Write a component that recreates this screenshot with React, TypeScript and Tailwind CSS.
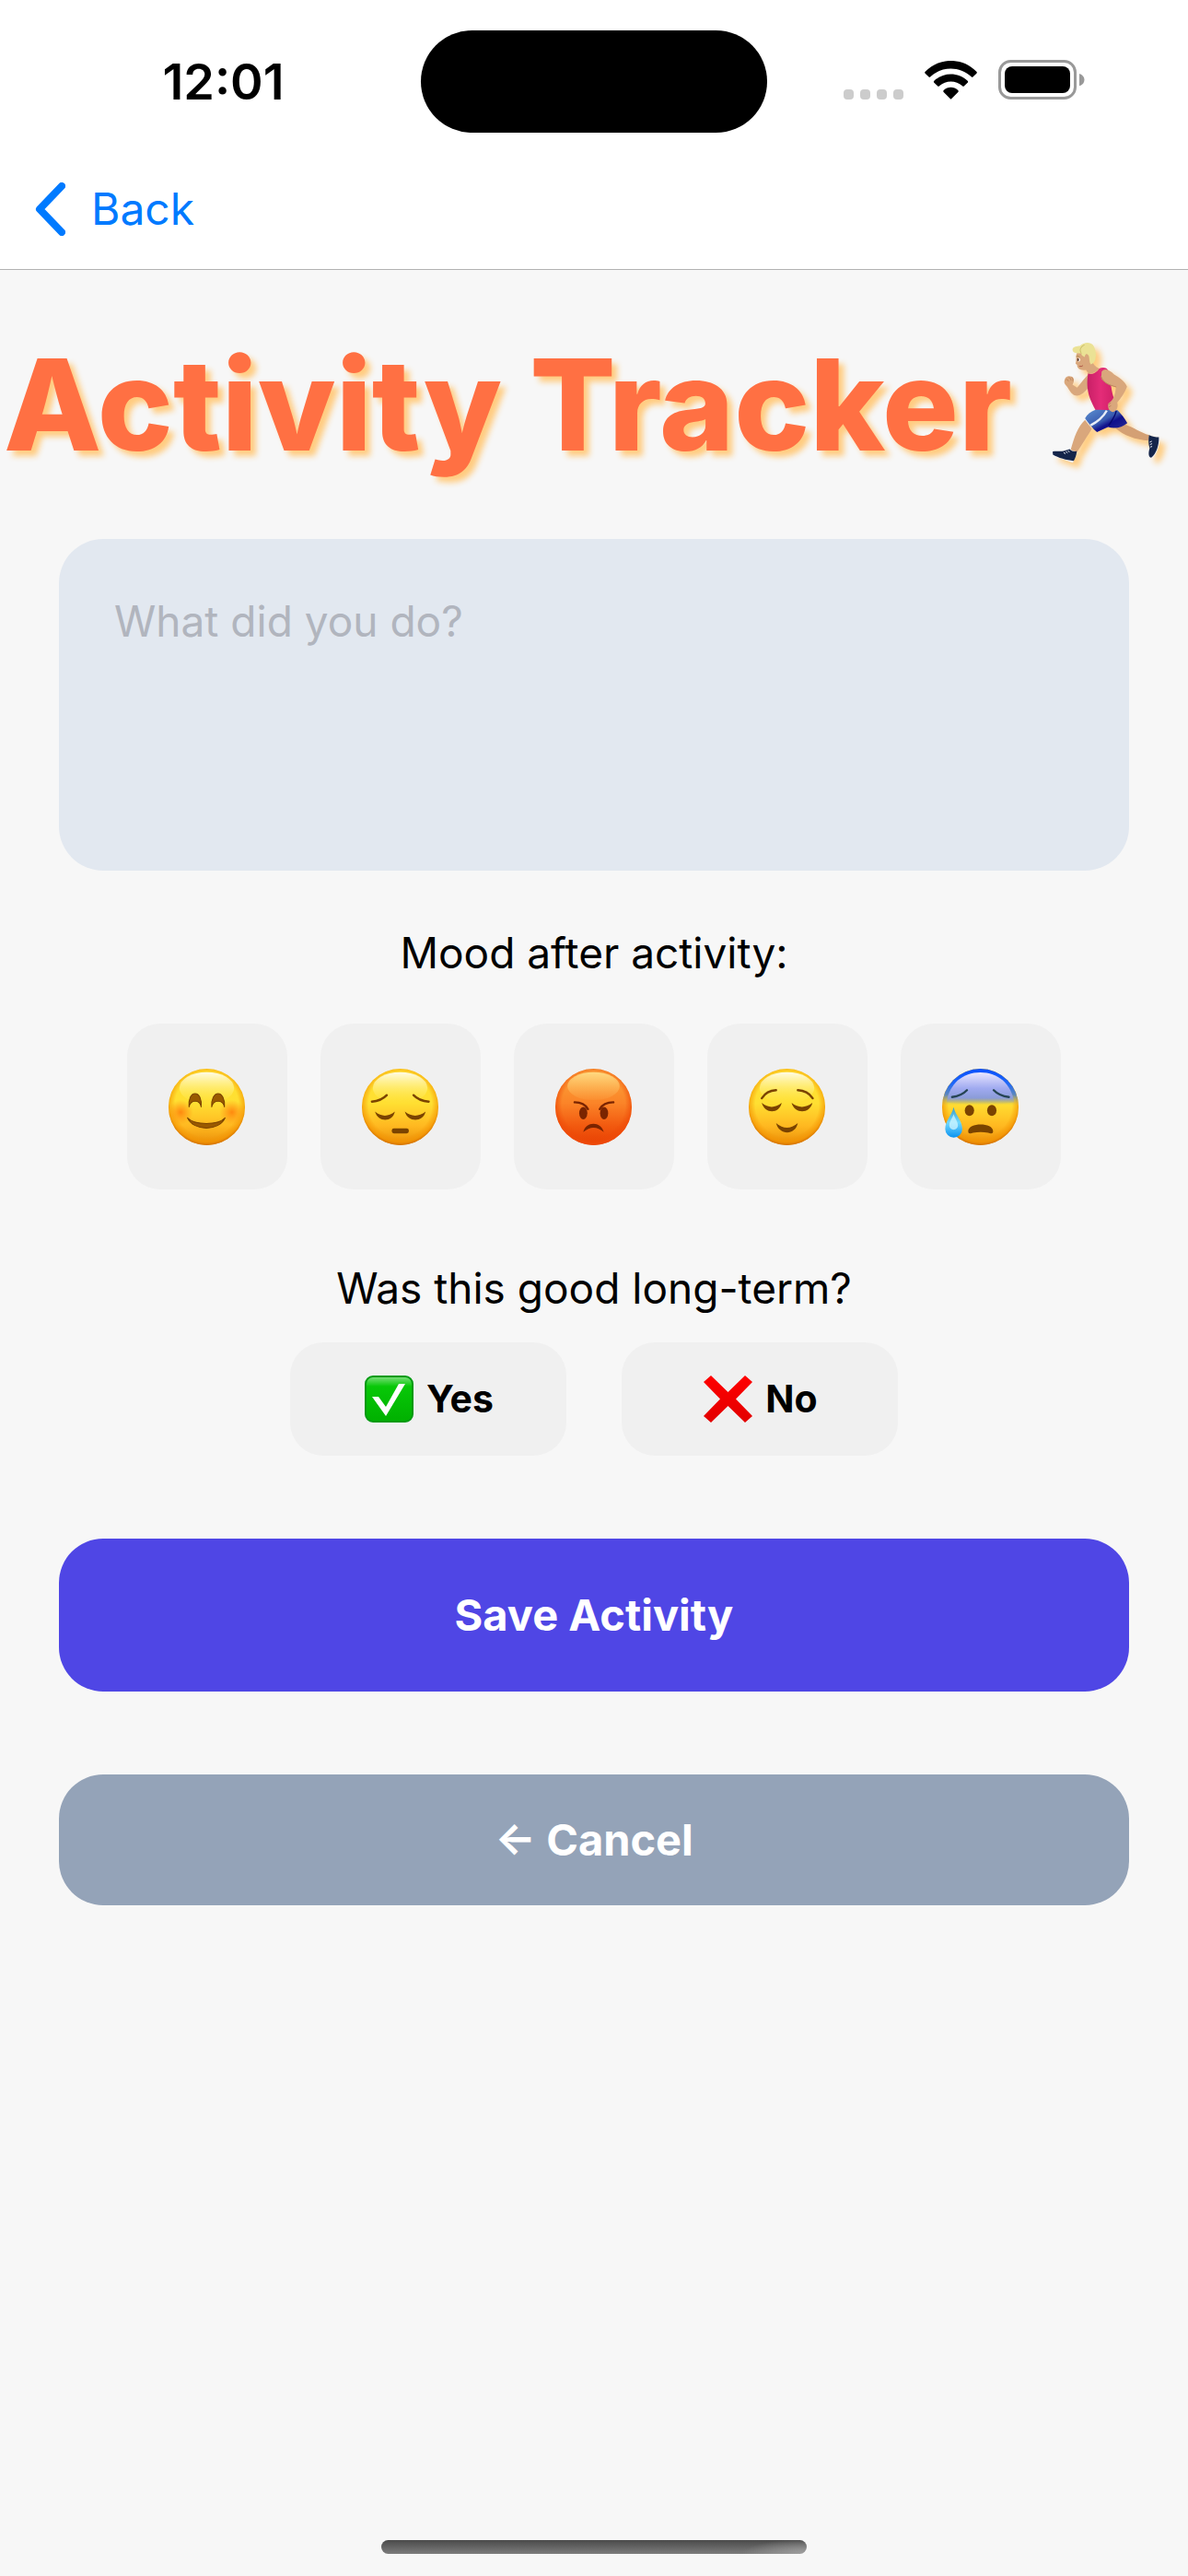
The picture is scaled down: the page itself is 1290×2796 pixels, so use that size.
import React, { useState } from 'react';

type Mood = 'happy' | 'sad' | 'angry' | 'relieved' | 'anxious';

const MOODS: Mood[] = ['happy', 'sad', 'angry', 'relieved', 'anxious'];

const INK = '#7a4300';

function MoodFace({ mood }: { mood: Mood }) {
  const base = `${mood}-base`;
  const rim = `${mood}-rim`;
  const shine = `${mood}-shine`;
  const extra = `${mood}-extra`;
  const angry = mood === 'angry';
  const anxious = mood === 'anxious';

  return (
    <svg viewBox="0 0 246 246" className="size-[83px]" fill="none" aria-hidden="true">
      <defs>
        <linearGradient id={base} x1="0" y1="0" x2="0" y2="1">
          <stop offset="0" stopColor={angry ? '#fba63c' : '#ffe030'} />
          <stop offset="0.45" stopColor={angry ? '#fb8428' : '#ffdf32'} />
          <stop offset="0.75" stopColor={angry ? '#f2590f' : '#ffb820'} />
          <stop offset="1" stopColor={angry ? '#e63e02' : '#e88d08'} />
        </linearGradient>
        <radialGradient id={rim} cx="0.5" cy="0.47" r="0.53">
          <stop offset="0.78" stopColor={angry ? '#ee4a08' : '#f39200'} stopOpacity="0" />
          <stop offset="0.92" stopColor={angry ? '#ee4a08' : '#f39200'} stopOpacity="0.6" />
          <stop offset="1" stopColor={angry ? '#f04c0c' : '#cf6c00'} stopOpacity="0.95" />
        </radialGradient>
        <linearGradient id={shine} x1="0" y1="0" x2="0" y2="1">
          <stop offset="0" stopColor={angry ? '#ffdc84' : '#fffdf0'} stopOpacity="0.95" />
          <stop offset="1" stopColor={angry ? '#ffc060' : '#fff060'} stopOpacity={angry ? 0.1 : 0} />
        </linearGradient>
        {mood === 'happy' && (
          <radialGradient id={extra}>
            <stop offset="0" stopColor="#ff7d0a" stopOpacity="0.85" />
            <stop offset="1" stopColor="#ff8a10" stopOpacity="0" />
          </radialGradient>
        )}
        {anxious && (
          <>
            <linearGradient id={extra} x1="0" y1="0" x2="0" y2="1">
              <stop offset="0" stopColor="#0a50ff" />
              <stop offset="0.2" stopColor="#1f68f8" />
              <stop offset="0.34" stopColor="#5585c4" stopOpacity="0.95" />
              <stop offset="0.48" stopColor="#b7ad60" stopOpacity="0" />
            </linearGradient>
            <linearGradient id="anxious-forehead" x1="0" y1="0" x2="0" y2="1">
              <stop offset="0" stopColor="#e8e6ff" />
              <stop offset="0.5" stopColor="#a0aaf0" />
              <stop offset="0.8" stopColor="#8b9cd8" />
              <stop offset="1" stopColor="#a7a98a" stopOpacity="0" />
            </linearGradient>
            <linearGradient id="anxious-drop" x1="0" y1="0" x2="0" y2="1">
              <stop offset="0" stopColor="#3b9cc4" />
              <stop offset="0.5" stopColor="#6fd8ff" />
              <stop offset="1" stopColor="#0b93f0" />
            </linearGradient>
          </>
        )}
      </defs>

      <circle cx="123" cy="123" r="123" fill={`url(#${base})`} />
      <circle cx="123" cy="123" r="123" fill={`url(#${rim})`} />
      {anxious ? (
        <>
          <circle cx="123" cy="123" r="123" fill={`url(#${extra})`} />
          <path
            d="M14 108C24 48 66 12 123 12s99 36 109 96c-54 9-164 9-218 0Z"
            fill="url(#anxious-forehead)"
          />
        </>
      ) : (
        <ellipse cx="123" cy={angry ? 56 : 62} rx={angry ? 84 : 88} ry={angry ? 45 : 51} fill={`url(#${shine})`} />
      )}

      {mood === 'happy' && (
        <>
          <circle cx="39" cy="140" r="40" fill={`url(#${extra})`} />
          <circle cx="204" cy="140" r="40" fill={`url(#${extra})`} />
          <g fill="#9a5a00" stroke={INK} strokeWidth="3" strokeLinejoin="round">
            <path d="M66 123C64 98 72 80 85.500 80S107 98 105 123C101 98 71 98 66 123Z" />
            <path d="M139 123C137 98 147 80 159.500 80S182 98 180 123C175 98 144 98 139 123Z" />
            <path d="M61 158C85 182 159 182 182 158C164 202 80 202 61 158Z" />
          </g>
        </>
      )}

      {mood === 'sad' && (
        <>
          <g stroke={INK} strokeWidth="7" strokeLinecap="round">
            <path d="M32 106Q62 104 80 85" />
            <path d="M166 85Q184 104 215 106" />
          </g>
          <g fill={INK}>
            <path d="M42 138Q74 164 106 138C99 173 52 174 42 138Z" />
            <path d="M138 138Q171 164 205 138C197 173 148 174 138 138Z" />
            <rect x="96" y="192" width="55" height="16" rx="7" />
          </g>
        </>
      )}

      {mood === 'angry' && (
        <>
          <g stroke="#7a2400" strokeWidth="7" strokeLinecap="round">
            <path d="M62 108Q93 108 105 130" />
            <path d="M187 108Q155 108 143 130" />
          </g>
          <g fill="#7a2400">
            <ellipse cx="90" cy="143" rx="13" ry="20" />
            <ellipse cx="157" cy="143" rx="13" ry="20" />
            <path d="M90 204C98 168 147 168 156 204Q123 176 90 204Z" />
          </g>
        </>
      )}

      {mood === 'relieved' && (
        <>
          <g stroke={INK} strokeWidth="7" strokeLinecap="round">
            <path d="M42 95Q58 70 88 69" />
            <path d="M158 69Q189 70 206 95" />
          </g>
          <g fill={INK}>
            <path d="M42 110Q74 136 106 110C99 146 52 147 42 110Z" />
            <path d="M138 110Q171 136 205 110C197 146 148 147 138 110Z" />
            <path d="M88 175Q123 205 158 175C150 215 98 215 88 175Z" />
          </g>
        </>
      )}

      {anxious && (
        <>
          <g stroke="#264554" strokeWidth="7" strokeLinecap="round">
            <path d="M32 91Q62 88 80 69" />
            <path d="M166 69Q184 88 215 91" />
          </g>
          <g fill={INK}>
            <ellipse cx="88" cy="134" rx="15" ry="18" />
            <ellipse cx="160" cy="134" rx="15" ry="18" />
            <path d="M84 201C84 172 164 172 164 201C164 213 154 207 148 206Q124 202 100 206C94 207 84 213 84 201Z" />
          </g>
          <path d="M37 124C43 150 65 168 65 194a27.500 27.500 0 0 1-55 0C10 168 31 150 37 124Z" fill="url(#anxious-drop)" />
          <path d="M37 146C41 160 51 170 51 182a14 14 0 0 1-28 0C23 170 33 160 37 146Z" fill="#d8f8ff" opacity="0.7" />
        </>
      )}
    </svg>
  );
}

function Runner() {
  return (
    <svg
      viewBox="80 51 400 438"
      className="h-[146px] w-[133px] shrink-0 drop-shadow-[6px_6px_3px_#ffcc80]"
      fill="none"
      aria-hidden="true"
    >
      <defs>
        <linearGradient id="run-shorts" x1="0" y1="0" x2="1" y2="1">
          <stop offset="0" stopColor="#5b8fd0" />
          <stop offset="0.45" stopColor="#3a5cb0" />
          <stop offset="0.6" stopColor="#10108c" />
          <stop offset="1" stopColor="#2a2f96" />
        </linearGradient>
        <linearGradient id="run-shirt" x1="0" y1="0" x2="1" y2="0">
          <stop offset="0" stopColor="#c81f66" />
          <stop offset="0.5" stopColor="#e42c78" />
          <stop offset="1" stopColor="#d02068" />
        </linearGradient>
      </defs>
      {/* legs */}
      <path d="M204 320C180 342 168 378 157 418L178 426C193 402 214 370 226 350Z" fill="#d9a77c" />
      <path d="M302 346C330 372 370 385 410 388L414 370C385 362 362 344 336 336Z" fill="#d4a074" />
      {/* shoes */}
      <path d="M98 425C96 432 98 436 104 439L164 460L168 452L108 431Z" fill="#f4f4f8" />
      <path d="M98 424C106 421 122 424 134 422L154 416C160 423 168 424 177 423C176 435 172 446 167 454C143 452 116 444 99 434Z" fill="#14254a" />
      <path d="M444 378L448 382C446 410 437 435 422 445L416 440Z" fill="#f4f4f8" />
      <path d="M413 370C422 374 436 377 445 377C446 402 437 431 420 444C411 442 410 430 415 412C410 398 411 382 413 370Z" fill="#14254a" />
      <path d="M134 427l6 4M141 424l6 4M148 420l5 6M415 393l7-3M416 401l7-3M417 409l6-2" stroke="#e8ecf5" strokeWidth="3" />
      {/* front arm */}
      <path d="M137 190C140 178 150 175 160 179C170 182 169 197 163 205L178 215C189 203 202 184 218 168L216 214C204 228 190 243 173 241C157 237 151 217 142 208C136 202 135 196 137 190Z" fill="#d9a77c" />
      <path d="M141 189q7-4 9 6M150 182q9 0 8 10M160 181q6 4 4 12" stroke="#b97f55" strokeWidth="2" />
      {/* shirt and shorts */}
      <path d="M214 168C226 174 240 168 250 153C262 147 276 150 280 160C289 198 290 232 299 250C296 270 290 281 284 289L238 288C223 258 204 228 214 168Z" fill="url(#run-shirt)" />
      <path d="M238 287L310 289C321 300 333 315 342 331C325 345 302 351 279 344L243 360C230 350 214 330 204 315C211 302 222 293 238 287Z" fill="url(#run-shorts)" />
      <path d="M222 338C247 326 264 309 275 290" stroke="#e7edf7" strokeWidth="7" />
      <path d="M281 339C291 324 302 310 306 291" stroke="#07076d" strokeWidth="4" />
      {/* back arm */}
      <path d="M258 163C271 148 285 160 299 172C315 182 334 193 341 212C334 232 321 249 309 264C314 278 306 293 295 295C282 292 277 280 280 267C290 260 298 252 302 232L305 213C286 209 263 198 257 184Z" fill="#d9a77c" />
      <path d="M256 178C264 201 285 207 306 213M280 270l8-5M281 278l8-4" stroke="#bb865c" strokeWidth="3" />
      {/* head */}
      <path d="M176 105C174 118 176 126 173 137L178 141C178 154 190 160 207 157C211 164 215 167 216 170C231 170 244 163 250 153C238 148 230 140 226 126L216 98L182 96Z" fill="#d9a77c" />
      <path d="M192 103C178 104 162 102 163 90C165 80 178 80 187 79C198 66 222 65 230 76C239 88 242 110 237 124C235 132 229 137 223 139C217 132 219 119 216 111C209 101 204 105 203 115C196 112 191 110 192 103Z" fill="#ebe295" />
      <path d="M192 103C184 93 190 80 202 76" stroke="#c8bc68" strokeWidth="3" />
      <ellipse cx="183" cy="124" rx="5" ry="6" fill="#fff" />
      <ellipse cx="181" cy="124" rx="3" ry="5" fill="#5b3320" />
      <path d="M175 113q6-3 11 2" stroke="#b08a48" strokeWidth="3" />
      <path d="M185 145q7 3 12-2" stroke="#b05a48" strokeWidth="3" />
    </svg>
  );
}

function StatusIcons() {
  return (
    <div className="flex items-end gap-[23px] pb-1">
      <div className="flex gap-[7px]">
        <span className="size-[11px] rounded bg-[#cccccc]" />
        <span className="size-[11px] rounded bg-[#cccccc]" />
        <span className="size-[11px] rounded bg-[#cccccc]" />
        <span className="size-[11px] rounded bg-[#cccccc]" />
      </div>
      {/* wifi */}
      <svg viewBox="0 0 171 126" className="h-[42px] w-[57px]" aria-hidden="true">
        <path d="M2 35C48-12 123-12 169 35Q172 38 169 41L158 52Q155 55 152 52C115 17 56 17 19 52Q16 55 13 52L2 41Q-1 38 2 35Z" />
        <path d="M31 65C62 36 109 36 140 65Q143 68 140 71L129 82Q126 85 123 82C102 63 69 63 48 82Q45 85 42 82L31 71Q28 68 31 65Z" />
        <path d="M62 96C76 83 95 83 109 96Q112 99 109 102L88 123Q85.500 126 83 123L62 102Q59 99 62 96Z" />
      </svg>
      {/* battery */}
      <svg viewBox="0 0 282 129" className="h-[43px] w-[94px]" aria-hidden="true">
        <rect x="4.500" y="4.500" width="246" height="120" rx="36" fill="none" stroke="#999999" strokeWidth="9" />
        <rect x="21" y="21" width="213" height="87" rx="24" />
        <path d="M264 45C286 51 286 79 264 85Z" fill="#999999" />
      </svg>
    </div>
  );
}

export default function App() {
  const [activity, setActivity] = useState('');
  const [mood, setMood] = useState<Mood | null>(null);
  const [longTerm, setLongTerm] = useState<boolean | null>(null);

  return (
    <div className="flex min-h-screen flex-col bg-[#f7f7f7] font-['Inter',sans-serif] text-black">
      <header className="border-b border-[#b2b2b2] bg-white">
        <div className="grid grid-cols-[1fr_376px_1fr] items-center pt-[33px] pb-[17px]">
          <span className="pl-7 text-center text-[54px] leading-none font-semibold">12:01</span>
          <div className="h-[111px] rounded-full bg-black" />
          <div className="flex justify-center pr-[30px]">
            <StatusIcons />
          </div>
        </div>
        <nav className="flex h-[131px] items-center px-[38px]">
          <button type="button" className="flex items-center gap-7 text-[48px] text-[#007aff]">
            <svg viewBox="0 0 33 58" className="h-[58px] w-[33px]" fill="none" aria-hidden="true">
              <path d="M29 4 5 29 29 54" stroke="currentColor" strokeWidth="8" strokeLinecap="round" strokeLinejoin="round" />
            </svg>
            Back
          </button>
        </nav>
      </header>

      <main className="flex flex-col">
        <h1 className="my-[60px] flex items-center justify-center gap-[38px] pr-4 text-[138px] leading-[172px] font-extrabold whitespace-nowrap text-[#ff7043] text-shadow-[6px_6px_6px_#ffcc80]">
          Activity Tracker
          <Runner />
        </h1>

        <div className="flex flex-col px-16">
          <textarea
            aria-label="What did you do?"
            placeholder="What did you do?"
            value={activity}
            onChange={(e) => setActivity(e.target.value)}
            className="h-[360px] resize-none rounded-[48px] bg-slate-200 p-[60px] text-[46px] leading-[58px] outline-none placeholder:text-[#b1b5be]"
          />

          <p className="mt-[60px] mb-12 text-center text-[46px] leading-[58px]">Mood after activity:</p>
          <div className="flex justify-center gap-9">
            {MOODS.map((m) => (
              <button
                key={m}
                type="button"
                aria-label={m}
                aria-pressed={mood === m}
                onClick={() => setMood(m)}
                className="flex h-[180px] w-[174px] items-center justify-center rounded-[36px] bg-[#f0f0f0] pr-[2px] aria-pressed:bg-indigo-200"
              >
                <MoodFace mood={m} />
              </button>
            ))}
          </div>

          <p className="mt-[78px] mb-[30px] text-center text-[46px] leading-[58px]">Was this good long-term?</p>
          <div className="flex justify-center gap-[60px]">
            <button
              type="button"
              aria-pressed={longTerm === true}
              onClick={() => setLongTerm(true)}
              className="flex h-[123px] w-[300px] items-center justify-center gap-3.5 rounded-[36px] bg-[#f0f0f0] pl-[2px] text-[41px] font-bold aria-pressed:bg-indigo-200"
            >
              <svg viewBox="0 0 53 51" className="h-[51px] w-[53px]" aria-hidden="true">
                <defs>
                  <linearGradient id="yes-fill" x1="0" y1="0" x2="0" y2="1">
                    <stop offset="0" stopColor="#7fe07f" />
                    <stop offset="0.22" stopColor="#08c808" />
                    <stop offset="1" stopColor="#00b000" />
                  </linearGradient>
                </defs>
                <rect x="1" y="1" width="51" height="49" rx="8" fill="url(#yes-fill)" stroke="#009a12" strokeWidth="2" />
                <path d="M8 23h7l8 11L37 9h7L23 44Z" fill="#fff" />
              </svg>
              Yes
            </button>
            <button
              type="button"
              aria-pressed={longTerm === false}
              onClick={() => setLongTerm(false)}
              className="flex h-[123px] w-[300px] items-center justify-center gap-3.5 rounded-[36px] bg-[#f0f0f0] pl-[2px] text-[41px] font-bold aria-pressed:bg-indigo-200"
            >
              <svg viewBox="0 0 53 51" className="h-[51px] w-[53px]" aria-hidden="true">
                <defs>
                  <linearGradient id="no-fill" x1="0" y1="0" x2="0" y2="1">
                    <stop offset="0" stopColor="#ff0000" />
                    <stop offset="1" stopColor="#e20000" />
                  </linearGradient>
                </defs>
                <path d="M8 0 26.500 18 45 0 53 7 35 25.500 53 44 45 51 26.500 33 8 51 0 44 18 25.500 0 7Z" fill="url(#no-fill)" />
              </svg>
              No
            </button>
          </div>

          <button type="button" className="mt-[90px] h-[166px] rounded-[48px] bg-[#4f46e5] text-[47px] font-bold text-white">
            Save Activity
          </button>
          <button type="button" className="mt-[90px] h-[142px] rounded-[48px] bg-[#94a3b8] text-[47px] font-bold text-white">
            ← Cancel
          </button>
        </div>
      </main>

      {/* home indicator */}
      <div className="mx-auto mt-auto mb-6 h-[15px] w-[462px] rounded-full bg-[radial-gradient(70px_16px_at_100%_100%,#a0a0a0,transparent),linear-gradient(#4a4a4a,#7d7d7d)]" />
    </div>
  );
}
